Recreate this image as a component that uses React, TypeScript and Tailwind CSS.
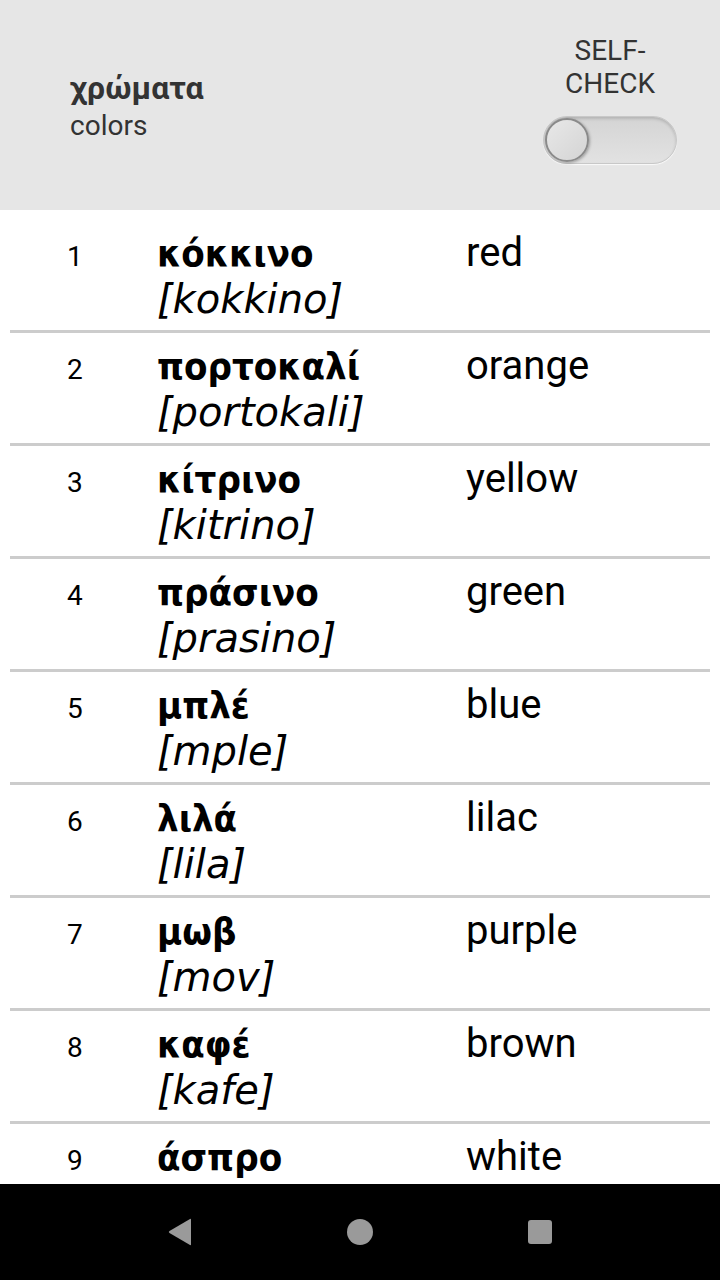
import React from "react";

const rows = [
  ["κόκκινο", "kokkino", "red"],
  ["πορτοκαλί", "portokali", "orange"],
  ["κίτρινο", "kitrino", "yellow"],
  ["πράσινο", "prasino", "green"],
  ["μπλέ", "mple", "blue"],
  ["λιλά", "lila", "lilac"],
  ["μωβ", "mov", "purple"],
  ["καφέ", "kafe", "brown"],
  ["άσπρο", "aspro", "white"],
  ["μαύρο", "mavro", "black"],
];

export default function App() {
  return (
    <div className="w-[720px] h-[1280px] flex flex-col overflow-hidden bg-white">
      <div className="h-[210px] shrink-0 bg-[#e6e6e6] flex items-start justify-between pl-[70px] pr-[43px]">
        <div className="pt-[69px] flex flex-col">
          <div className="text-[32px] leading-[38px] font-bold text-[#333]" style={{ fontFamily: "Roboto, 'Noto Sans', sans-serif" }}>χρώματα</div>
          <div className="text-[28px] leading-[38px] text-[#333]" style={{ fontFamily: "Roboto, sans-serif" }}>colors</div>
        </div>
        <div className="pt-[34px] flex flex-col items-center">
          <div className="text-[28px] leading-[33px] text-[#333] text-center" style={{ fontFamily: "Roboto, sans-serif" }}>SELF-<br />CHECK</div>
          <div className="mt-[16px] relative w-[134px] h-[48px] rounded-full bg-gradient-to-b from-[#d4d4d4] to-[#e2e2e2] border border-[#c8c8c8] shadow-[inset_0_2px_3px_rgba(0,0,0,0.15),0_1px_1px_rgba(255,255,255,0.8)]">
            <div className="absolute left-[1px] top-[1px] w-[44px] h-[44px] rounded-full bg-gradient-to-br from-[#e8e8e8] to-[#d4d4d4] border-[2px] border-[#8a8a8a] shadow-[1px_1px_3px_rgba(0,0,0,0.3)]" />
          </div>
        </div>
      </div>
      <div className="flex-1 overflow-hidden pt-[10px] px-[10px]">
        {rows.map(([gr, tr, en], i) => (
          <div key={i} className="h-[113px] border-b-[3px] border-[#cccccc] flex items-start">
            <div className="w-[147px] pl-[57px] pt-[22px] text-[28px] leading-[30px] text-black" style={{ fontFamily: "Roboto, sans-serif" }}>{i + 1}</div>
            <div className="w-[309px] pt-[10px] flex flex-col">
              <div className="text-[38px] leading-[46px] font-bold font-stretch-condensed text-black whitespace-nowrap" style={{ fontFamily: "'DejaVu Sans Condensed', 'DejaVu Sans', sans-serif" }}>{gr}</div>
              <div className="text-[40px] leading-[46px] italic text-black whitespace-nowrap" style={{ fontFamily: "'DejaVu Sans', sans-serif" }}>[{tr}]</div>
            </div>
            <div className="pt-[10px] text-[40px] leading-[46px] text-black" style={{ fontFamily: "Roboto, sans-serif" }}>{en}</div>
          </div>
        ))}
      </div>
      <div className="h-[96px] shrink-0 bg-black flex items-center justify-center">
        <div className="w-[180px] flex justify-center">
          <svg width="26" height="28" viewBox="0 0 26 28">
            <path d="M24 1.5 L24 26.5 Q24 27.5 23 27 L2.5 15 Q1 14 2.5 13 L23 1 Q24 0.5 24 1.5 Z" fill="#9a9a9a" />
          </svg>
        </div>
        <div className="w-[180px] flex justify-center">
          <div className="w-[26px] h-[26px] rounded-full bg-[#9a9a9a]" />
        </div>
        <div className="w-[180px] flex justify-center">
          <div className="w-[24px] h-[24px] rounded-[3px] bg-[#9a9a9a]" />
        </div>
      </div>
    </div>
  );
}
